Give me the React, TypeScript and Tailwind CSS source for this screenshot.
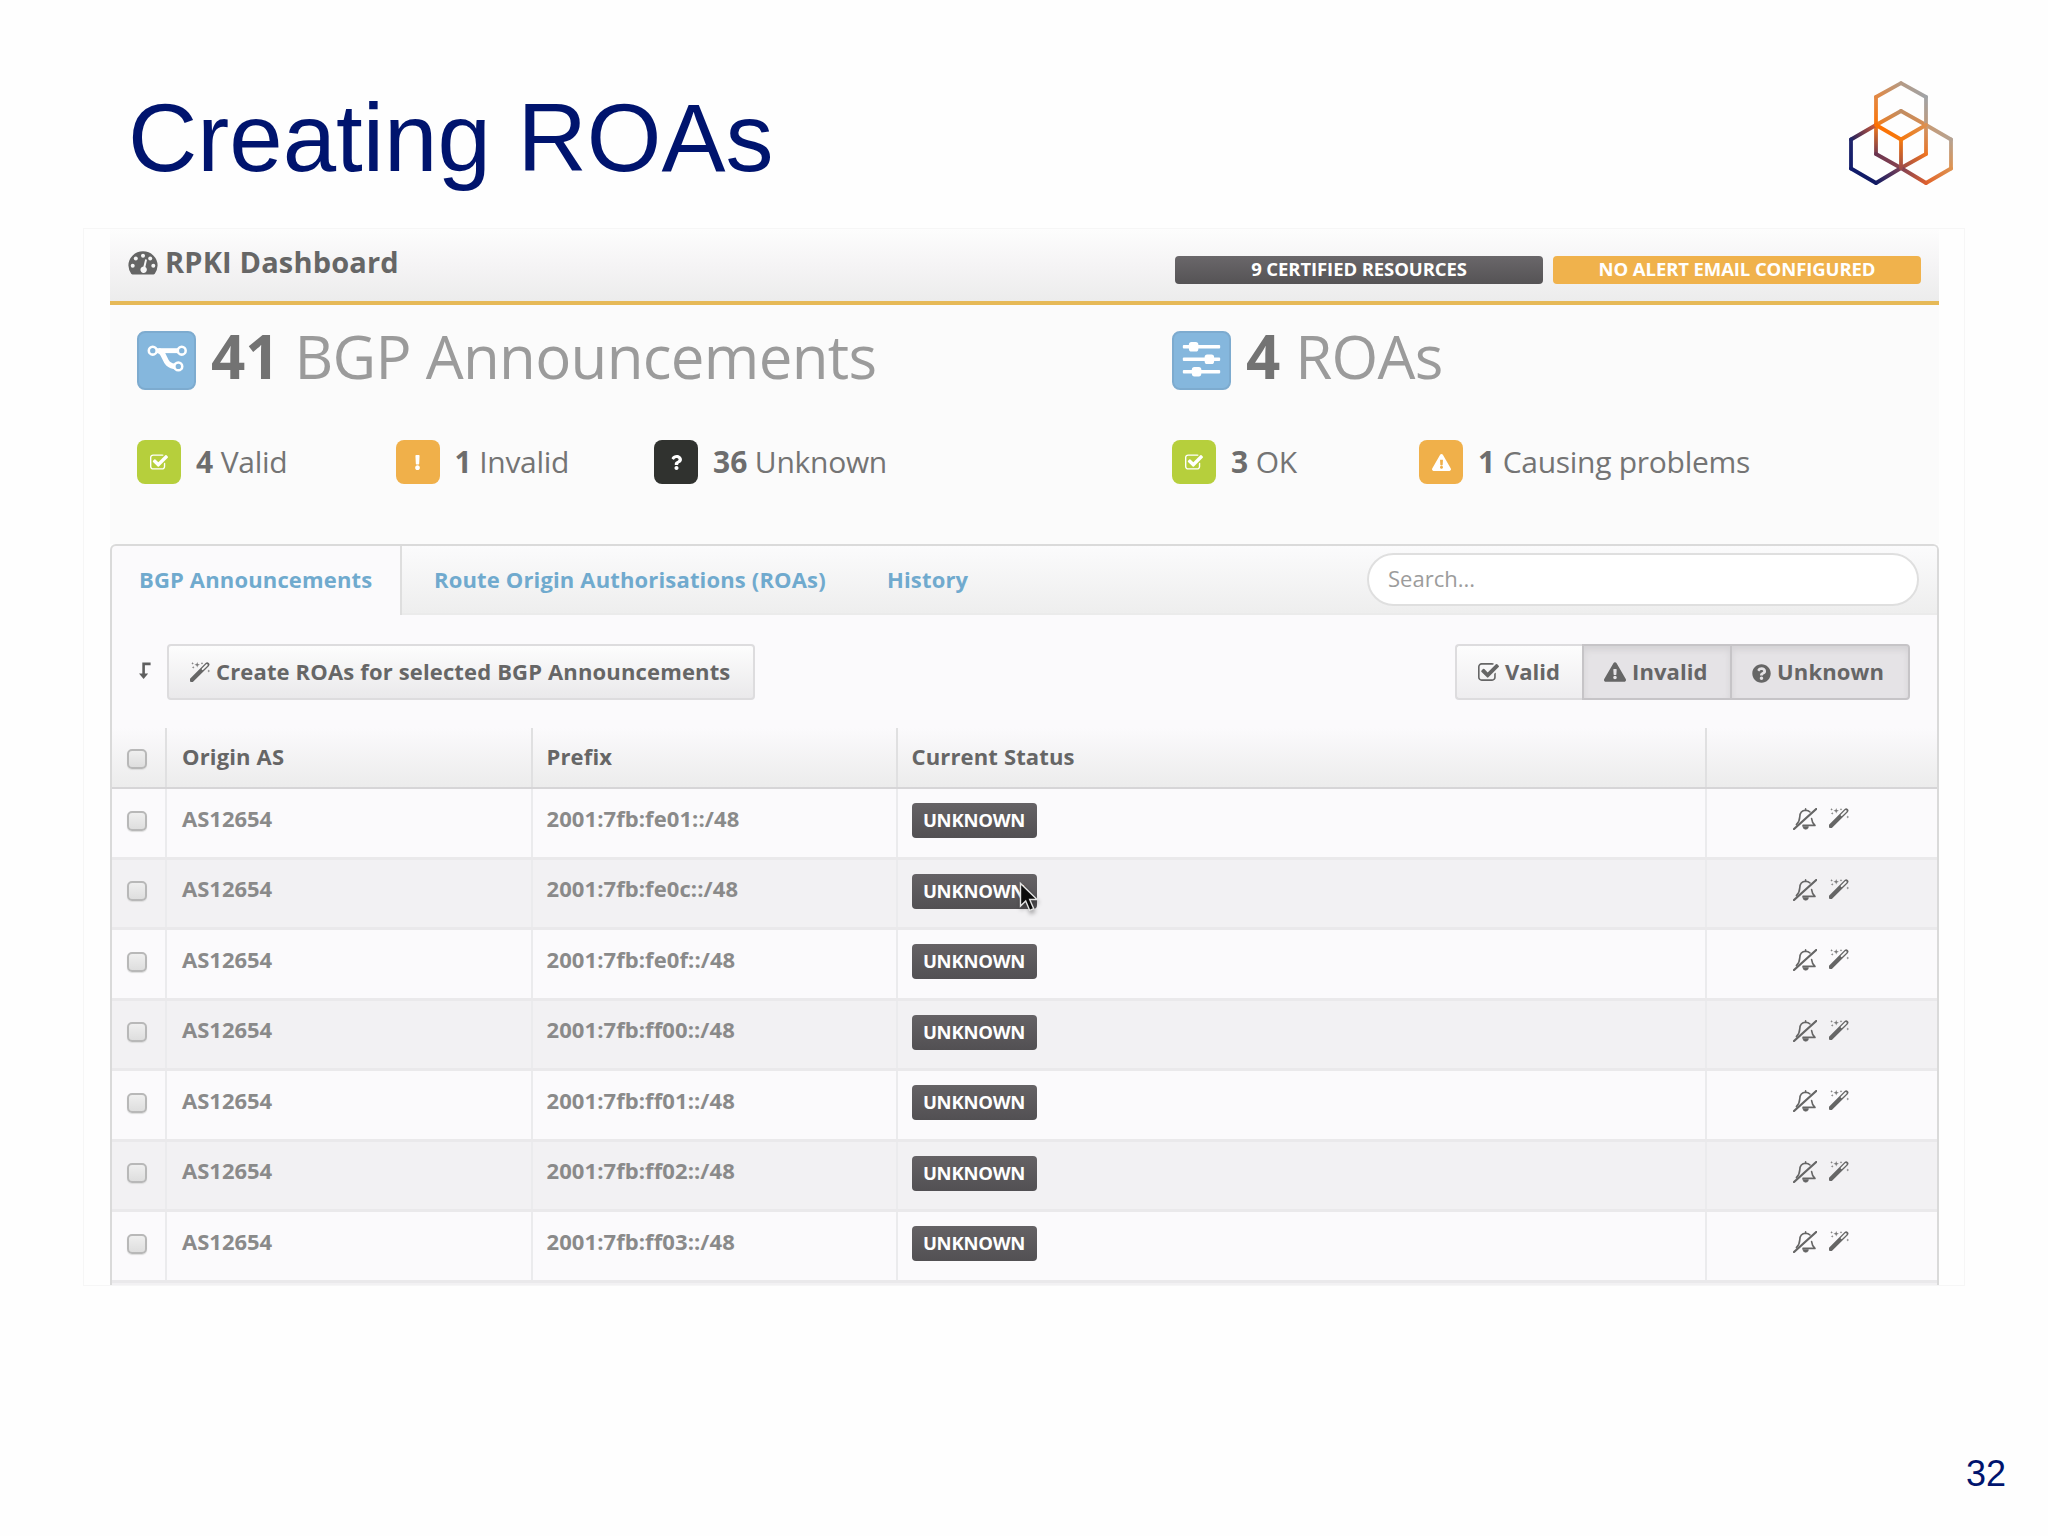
import React from "react";
import { FaExclamation, FaExclamationTriangle, FaQuestion, FaQuestionCircle } from "react-icons/fa";

type Pt = [number, number];

const segments: { a: Pt; b: Pt; from: string; to: string }[] = [
  { a: [25, 44], b: [25, 73], from: "#f57a18", to: "#74384f" },
  { a: [25, 73], b: [50, 87], from: "#6b3550", to: "#8a4550" },
  { a: [75, 44], b: [75, 73], from: "#cf9567", to: "#e87527" },
  { a: [75, 73], b: [50, 87], from: "#f07522", to: "#9a4a4a" },
  { a: [25, 44], b: [50, 30], from: "#f57c18", to: "#bf8f68" },
  { a: [50, 30], b: [75, 44], from: "#c08c62", to: "#d98d50" },
  { a: [25, 16], b: [50, 2.2], from: "#e38842", to: "#b59a84" },
  { a: [50, 2.2], b: [75, 16], from: "#b59a84", to: "#a0a3a6" },
  { a: [75, 16], b: [75, 44], from: "#a0a3a6", to: "#bf9a7c" },
  { a: [25, 16], b: [25, 44], from: "#e38842", to: "#fb7408" },
  { a: [25, 44], b: [0, 58.5], from: "#d05a38", to: "#20205f" },
  { a: [0, 58.5], b: [0, 87.5], from: "#20266b", to: "#101b6b" },
  { a: [0, 87.5], b: [25, 102], from: "#101b6b", to: "#121b64" },
  { a: [25, 102], b: [50, 87], from: "#121b64", to: "#7c4055" },
  { a: [75, 44], b: [100, 58.5], from: "#c99a72", to: "#b5a292" },
  { a: [100, 58.5], b: [100, 87.5], from: "#b5a292", to: "#de9250" },
  { a: [100, 87.5], b: [75, 102], from: "#de9250", to: "#e2642a" },
  { a: [75, 102], b: [50, 87], from: "#dc6030", to: "#7c4055" },
  { a: [50, 87], b: [50, 58.5], from: "#a04c48", to: "#f5790f" },
  { a: [25, 44], b: [50, 58.5], from: "#ff7000", to: "#f5790f" },
  { a: [75, 44], b: [50, 58.5], from: "#dc9050", to: "#f5790f" },
];

function HexLogo() {
  return (
    <svg viewBox="-2 -2 104 106" className="h-[106px] w-[104px]" strokeWidth="3.8" strokeLinecap="round">
      <defs>
        {segments.map((s, i) => (
          <linearGradient key={i} id={`seg${i}`} gradientUnits="userSpaceOnUse" x1={s.a[0]} y1={s.a[1]} x2={s.b[0]} y2={s.b[1]}>
            <stop offset="0" stopColor={s.from} />
            <stop offset="1" stopColor={s.to} />
          </linearGradient>
        ))}
      </defs>
      {segments.map((s, i) => (
        <path key={i} d={`M${s.a[0]} ${s.a[1]}L${s.b[0]} ${s.b[1]}`} stroke={`url(#seg${i})`} />
      ))}
    </svg>
  );
}

function Gauge() {
  return (
    <svg viewBox="0 0 30 24" className="h-6 w-[30px]">
      <path d="M4.6 23.6Q3.8 23.6 3.2 22.8A15 15 0 0 1 .4 14.6a14.6 14.3 0 0 1 29.2 0a15 15 0 0 1-2.8 8.2q-.6.8-1.4.8z" fill="#656565" />
      <g fill="#f5f5f5">
        <circle cx="4.7" cy="14.8" r="2" />
        <circle cx="7.8" cy="7.6" r="2" />
        <circle cx="15" cy="4.7" r="2" />
        <circle cx="22.2" cy="7.6" r="2" />
        <circle cx="25.3" cy="14.8" r="2" />
        <path d="M17.2 8.2l1.8.5-1.6 7.4a3.2 3.2 0 1 1-2-.5z" />
      </g>
    </svg>
  );
}

function Check({ className }: { className: string }) {
  return (
    <svg viewBox="64 128 1664 1408" className={className} fill="currentColor">
      <path d="M1472 930v318q0 119-84.5 203.5t-203.5 84.5h-832q-119 0-203.5-84.5t-84.5-203.5v-832q0-119 84.5-203.5t203.5-84.5h832q63 0 117 25 15 7 18 23 3 17-9 29l-49 49q-10 10-23 10-3 0-9-2-23-6-45-6h-832q-66 0-113 47t-47 113v832q0 66 47 113t113 47h832q66 0 113-47t47-113v-254q0-13 9-22l64-64q10-10 23-10 6 0 12 3 20 8 20 29zm231-489l-814 814q-24 24-57 24t-57-24l-430-430q-24-24-24-57t24-57l110-110q24-24 57-24t57 24l263 263 647-647q24-24 57-24t57 24l110 110q24 24 24 57t-24 57z" />
    </svg>
  );
}

function Wand() {
  return (
    <svg viewBox="0 0 20 20" className="h-5 w-5 shrink-0" fill="none">
      <path d="M1.8 18L17.2 2.6" stroke="#666" strokeWidth="4.4" strokeLinecap="round" />
      <path d="M12.6 7.2L16.8 3" stroke="#f6f6f6" strokeWidth="1.8" strokeLinecap="round" />
      <g fill="#7a7a7a">
        <path d="M7.2 0l.7 2 2 .7-2 .7-.7 2-.7-2-2-.7 2-.7z" />
        <path d="M2.6 0l.4 1 1 .4-1 .4-.4 1-.4-1-1-.4 1-.4z" />
        <path d="M3.2 4l.4 1 1 .4-1 .4-.4 1-.4-1-1-.4 1-.4z" />
        <path d="M12 0l.4.9.9.4-.9.4-.4.9-.4-.9-.9-.4.9-.4z" />
        <path d="M18.8 7.6l.4 1 .8.4-.8.4-.4 1-.4-1-1-.4 1-.4z" />
      </g>
    </svg>
  );
}

function BellOff() {
  return (
    <svg viewBox="0 0 24 22" className="h-[22px] w-6" fill="none" stroke="#666" strokeWidth="1.6" strokeLinecap="round" strokeLinejoin="round">
      <path d="M12.6 2.2V.9" />
      <path d="M3.4 16.6Q6.6 13.4 6.8 8.6Q7 2.6 12.6 2.3Q15.4 2.4 17 4" />
      <path d="M18.6 10.6Q19 14.8 22 17.4H10" />
      <path d="M23.2 1L1 21" strokeWidth="2.3" />
      <path d="M10 18.6h5.4a2.6 2.6 0 0 1-5.4 0z" fill="#666" strokeWidth=".6" />
    </svg>
  );
}

function DownArrow() {
  return (
    <svg viewBox="0 0 12 18" className="h-[18px] w-3" fill="none">
      <path d="M11.6 1.9H4.6V12" stroke="#5f5f5f" strokeWidth="2.6" />
      <path d="M0 11.4h9.2L4.6 17z" fill="#5f5f5f" />
    </svg>
  );
}

function Branch() {
  return (
    <svg viewBox="0 0 60 60" className="size-full" fill="none" stroke="#fff">
      <path d="M16 20H45" strokeWidth="5" />
      <path d="M22 20C30 22 26 36 40 36" strokeWidth="5.4" />
      <g strokeWidth="2.6" fill="#82b4da">
        <circle cx="16" cy="20" r="4" />
        <circle cx="45.5" cy="20" r="4" />
        <circle cx="42" cy="36" r="4" />
      </g>
    </svg>
  );
}

function Sliders() {
  return (
    <svg viewBox="0 0 60 60" className="size-full" fill="#fff">
      {[
        [16, 22],
        [28.7, 38],
        [41.4, 25],
      ].map(([y, x]) => (
        <g key={y}>
          <rect x="11" y={y - 1.7} width="38" height="3.4" rx="1" />
          <rect x={x - 4.8} y={y - 4.8} width="9.6" height="9.6" rx="2.6" />
        </g>
      ))}
    </svg>
  );
}

function Headline({ icon, count, label }: { icon: React.ReactNode; count: string; label: string }) {
  return (
    <div className="flex h-[60px] items-center">
      <div className="size-[59px] rounded-lg border-2 border-[#7dabcf] bg-[#85b7dd]">
        <div className="-m-0.5 size-[59px]">{icon}</div>
      </div>
      <div className="mb-[8px] ml-[15px] whitespace-pre text-[60px] leading-[60px] tracking-[-0.7px] text-[#9b9b9b]">
        <b className="font-bold tracking-normal text-[#737373]">{count}</b> {label}
      </div>
    </div>
  );
}

function Stat({ tile, icon, count, label, className }: { tile: string; icon: React.ReactNode; count: string; label: string; className: string }) {
  return (
    <div className={`flex h-11 items-center ${className}`}>
      <div className={`flex size-11 items-center justify-center rounded-lg text-white ${tile}`}>{icon}</div>
      <div className="ml-[15px] whitespace-nowrap text-[30px] leading-[30px] tracking-[-0.28px] text-[#747474]">
        <b className="font-bold tracking-normal text-[#6d6d6d]">{count}</b> {label}
      </div>
    </div>
  );
}

function Checkbox() {
  return <div className="size-5 rounded-[5px] border-2 border-[#b8b8b8] bg-linear-to-b from-[#efefef] to-[#dedede] shadow-[0_1px_1px_#dcdcdc]" />;
}

const prefixes = ["fe01", "fe0c", "fe0f", "ff00", "ff01", "ff02", "ff03"];
const cols = "grid grid-cols-[55px_365.5px_365px_809px_1fr]";

export default function App() {
  return (
    <main className="flex h-[1536px] w-[2048px] flex-col overflow-hidden bg-[#fefefe] font-['Open_Sans',sans-serif]">
      <header className="flex h-[228px] shrink-0 items-start justify-between pl-[128px] pr-[95px]">
        <h1 className="mt-[90px] font-['Liberation_Sans',sans-serif] text-[96px] leading-[96px] text-[#00146e]">Creating ROAs</h1>
        <div className="mt-[79px]">
          <HexLogo />
        </div>
      </header>

      <section className="ml-[83px] flex h-[1058px] w-[1882px] shrink-0 flex-col border border-[#f6f6f6] bg-[#fefefe] pl-[26px] pr-[25px]">
        <div className="flex h-[76px] shrink-0 items-start border-b-4 border-[#e6b957] bg-linear-to-b from-[#fdfdfd] via-[#f5f4f5] to-[#ececec] pl-[18px] pr-[18px]">
          <div className="mt-[22px]">
            <Gauge />
          </div>
          <h2 className="ml-[7px] mt-[18px] text-[29px] font-bold leading-[29px] tracking-[0.16px] text-[#666]">RPKI Dashboard</h2>
          <div className="ml-auto mt-[26.5px] flex gap-[10px] text-[18.5px] font-bold leading-[26px] tracking-[-0.1px] text-white">
            <div className="h-7 w-[368px] rounded-sm bg-linear-to-b from-[#6a676a] to-[#555355] text-center">9 CERTIFIED RESOURCES</div>
            <div className="h-7 w-[368px] rounded-sm bg-[#f0b24c] text-center">NO ALERT EMAIL CONFIGURED</div>
          </div>
        </div>

        <div className="grid h-[239px] shrink-0 grid-cols-[1035px_1fr] bg-[#fbfbfb] pl-[27px] pt-[25px]">
          <div>
            <Headline icon={<Branch />} count="41" label="BGP Announcements" />
            <div className="mt-[50px] flex">
              <Stat className="w-[258.5px]" tile="bg-[#b6cf3c]" icon={<Check className="h-4 w-[18px]" />} count="4" label="Valid" />
              <Stat className="w-[258.5px]" tile="bg-[#f0b04a]" icon={<FaExclamation className="size-[15px]" />} count="1" label="Invalid" />
              <Stat className="" tile="bg-[#30322f]" icon={<FaQuestion className="size-[15px]" />} count="36" label="Unknown" />
            </div>
          </div>
          <div>
            <Headline icon={<Sliders />} count="4" label="ROAs" />
            <div className="mt-[50px] flex">
              <Stat className="w-[247px]" tile="bg-[#b6cf3c]" icon={<Check className="h-4 w-[18px]" />} count="3" label="OK" />
              <Stat className="" tile="bg-[#f0b04a]" icon={<FaExclamationTriangle className="size-[19px]" />} count="1" label="Causing problems" />
            </div>
          </div>
        </div>

        <div className="flex min-h-0 flex-1 flex-col overflow-hidden rounded-t-md border-2 border-b-0 border-[#dadada] bg-[#fbfafc]">
          <div className="flex h-[69px] shrink-0 text-[22px] font-bold leading-[22px] tracking-[0.15px] text-[#70aace]">
            <div className="w-[290px] border-r-2 border-[#dedede] pl-[27px] pt-[22px]">BGP Announcements</div>
            <div className="flex flex-1 border-b-2 border-[#ebebeb] bg-linear-to-b from-[#fbfbfc] to-[#eeeeee]">
              <div className="w-[453px] pl-[32px] pt-[22px]">Route Origin Authorisations (ROAs)</div>
              <div className="pl-[32px] pt-[22px]">History</div>
              <div className="ml-auto mr-[18px] mt-[7px] h-[53px] w-[552px] rounded-full border-2 border-[#dfdfdf] bg-white pl-[19px] pt-[12px] font-normal tracking-normal text-[#9c9c9c]">Search...</div>
            </div>
          </div>

          <div className="flex h-[113px] shrink-0 items-start pl-[27px] pr-[27px] pt-[29px] text-[22px] font-bold leading-[22px] text-[#666]">
            <div className="mt-[18px]">
              <DownArrow />
            </div>
            <div className="ml-[16px] flex h-14 w-[588px] items-center rounded-sm border-2 border-[#dddcde] bg-linear-to-b from-[#fdfdfd] to-[#eae9eb] pl-[21px]">
              <Wand />
              <span className="mb-[2px] ml-[6px] whitespace-nowrap tracking-[0.15px]">Create ROAs for selected BGP Announcements</span>
            </div>
            <div className="ml-auto flex h-14 w-[455px]">
              <div className="flex w-[127px] items-center rounded-l-sm border-2 border-r-0 border-[#dddcde] bg-linear-to-b from-[#fdfdfd] to-[#eeedef] pl-[21px]">
                <Check className="h-[18px] w-[21px]" />
                <span className="mb-[2px] ml-[6px]">Valid</span>
              </div>
              <div className="flex w-[148px] items-center border-2 border-r-0 border-[#c6c4c7] bg-[#e5e3e6] pl-[20px] shadow-[inset_0_4px_6px_#d4d2d5]">
                <FaExclamationTriangle className="size-[22px]" />
                <span className="mb-[2px] ml-[6px] tracking-[0.1px]">Invalid</span>
              </div>
              <div className="flex flex-1 items-center rounded-r-sm border-2 border-[#c6c4c7] bg-[#e5e3e6] pl-[20px] shadow-[inset_0_4px_6px_#d4d2d5]">
                <FaQuestionCircle className="mt-[3px] size-[19px]" />
                <span className="mb-[2px] ml-[6px] tracking-[0.15px]">Unknown</span>
              </div>
            </div>
          </div>

          <div className={`${cols} h-[61px] shrink-0 border-b-2 border-[#d6d5d7] bg-linear-to-b from-[#fbfafc] to-[#ececec] text-[22px] font-bold leading-[22px] tracking-[0.15px] text-[#666]`}>
            <div className="border-r-2 border-[#e0e0e1] pl-[15px] pt-[21px]">
              <Checkbox />
            </div>
            <div className="border-r-2 border-[#e0e0e1] pl-[15px] pt-[17px]">Origin AS</div>
            <div className="border-r-2 border-[#e0e0e1] pl-[14px] pt-[17px]">Prefix</div>
            <div className="border-r-2 border-[#e0e0e1] pl-[14px] pt-[17px]">Current Status</div>
            <div />
          </div>

          {prefixes.map((p, i) => (
            <div key={p} className={`${cols} h-[70.5px] shrink-0 border-b-[3px] border-[#eae9eb] text-[22px] font-bold leading-[22px] text-[#8a8a8a] ${i % 2 ? "bg-[#f2f1f3]" : "bg-[#fbfafc]"}`}>
              <div className="border-r-2 border-[#ebebed] pl-[15px] pt-[21.5px]">
                <Checkbox />
              </div>
              <div className="border-r-2 border-[#ebebed] pl-[15px] pt-[17.5px]">AS12654</div>
              <div className="border-r-2 border-[#ebebed] pl-[14px] pt-[17.5px] tracking-[0.08px]">2001:7fb:{p}::/48</div>
              <div className="border-r-2 border-[#ebebed] pl-[14px] pt-[14px]">
                <div className="relative h-[35px] w-[125px] rounded-sm bg-linear-to-b from-[#656265] to-[#525053] text-center text-[18.5px] leading-[34px] tracking-[-0.25px] text-white">
                  UNKNOWN
                  {i === 1 && (
                    <svg viewBox="0 0 22 32" className="absolute left-[107px] top-[8px] h-8 w-[22px] overflow-visible drop-shadow-[1px_3px_2px_#00000055]">
                      <path d="M1.5 1.5V24l5.2-5 4 9.4 4-1.7-4-9.2h7.4z" fill="#0c0c0c" stroke="#e4e4e4" strokeWidth="1.4" />
                    </svg>
                  )}
                </div>
              </div>
              <div className="flex gap-[12px] pl-[86px] pt-[19px]">
                <BellOff />
                <Wand />
              </div>
            </div>
          ))}
          <div className="flex-1 bg-[#f2f1f3]" />
        </div>
      </section>

      <footer className="mt-[170px] pr-[42px] text-right font-['Liberation_Sans',sans-serif] text-[36px] leading-[36px] text-[#00146e]">32</footer>
    </main>
  );
}
